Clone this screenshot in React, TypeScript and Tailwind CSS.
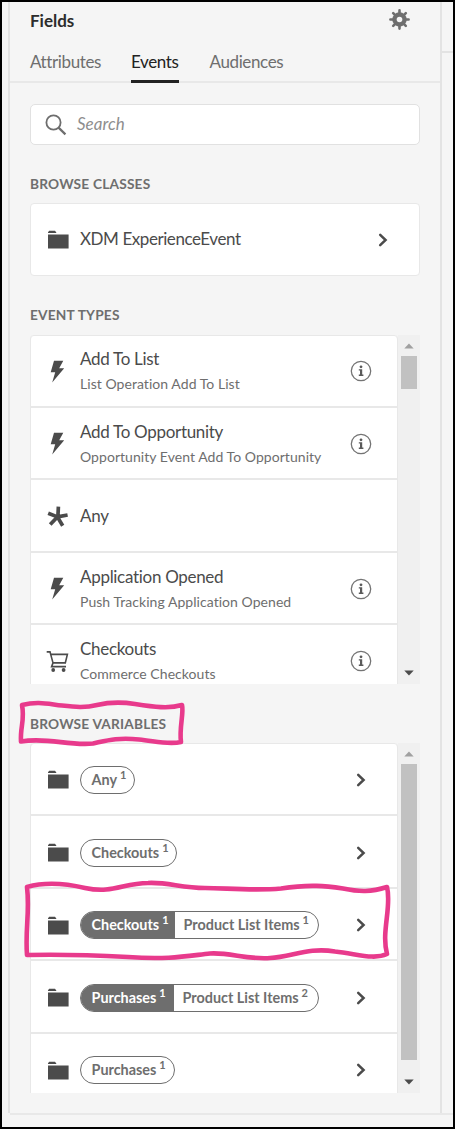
import React from "react";

type IconProps = { className?: string };

const Folder = () => (
  <svg className="block" width="21" height="19" viewBox="0 0 21 19" fill="#4b4b4b">
    <path d="M0 2.2 1.2.7H7L8.3 2.4V3H0zM0 4.5h20.6v14H0z" />
  </svg>
);

const Bolt = () => (
  <svg className="block" width="15" height="23" viewBox="0 0 15 23" fill="#4b4b4b">
    <path d="M4 .8H13.3L9.2 8.3H14.2L2.2 22.4 5.2 12.2H.7z" />
  </svg>
);

const Asterisk = () => (
  <svg className="block" width="21" height="21" viewBox="0 0 21 21" stroke="#4b4b4b" strokeWidth="3.7">
    <path d="M11.4 .7 10.9 10.4M10.4 10.9 1.2 7.2M10.4 10.9 20.6 9M10.4 10.9 3.2 18.6M10.4 10.9l5.3 8.8" />
  </svg>
);

const Cart = () => (
  <svg className="block" width="23" height="23" viewBox="0 0 23 23" fill="none" stroke="#4b4b4b" strokeWidth="1.6">
    <path d="M.7 1.9H4L7 12.9 5.6 16.6H20M4.8 4.4H21.4L19.3 12.9H7" />
    <circle cx="7.2" cy="20" r="1.9" fill="#4b4b4b" stroke="none" />
    <circle cx="17.6" cy="20" r="1.9" fill="#4b4b4b" stroke="none" />
  </svg>
);

const Info = () => (
  <svg className="block" width="22" height="22" viewBox="0 0 22 22">
    <circle cx="11" cy="11" r="9.7" fill="none" stroke="#747474" strokeWidth="1.3" />
    <circle cx="11" cy="6.8" r="1.4" fill="#5a5a5a" />
    <path d="M8.8 9.2H12.2V14.5H13.4V15.9H8.8V14.5H10V10.6H8.8z" fill="#5a5a5a" />
  </svg>
);

const Chevron = () => (
  <svg className="block" width="10" height="14" viewBox="0 0 10 14" fill="none" stroke="#4b4b4b" strokeWidth="2.5">
    <path d="M2.2 1.8 7.6 7 2.2 12.2" strokeLinecap="round" />
  </svg>
);

const Gear = () => (
  <svg className="block" width="21" height="21" viewBox="0 0 21 21">
    <g stroke="#6e6e6e" strokeWidth="2.6" strokeLinecap="round">
      <path d="M10.5 1.4V19.6M1.4 10.5H19.6" />
      <path d="M4.2 4.2 16.8 16.8M16.8 4.2 4.2 16.8" />
    </g>
    <circle cx="10.5" cy="10.5" r="7.2" fill="#6e6e6e" />
    <circle cx="10.5" cy="10.5" r="2.8" fill="#f5f5f5" />
  </svg>
);

const SearchIcon = () => (
  <svg className="block" width="22" height="22" viewBox="0 0 22 22" fill="none" stroke="#6e6e6e" strokeWidth="1.8">
    <circle cx="8.5" cy="8.5" r="7.1" />
    <path d="M13.6 13.6 20.4 20.4" strokeWidth="2.2" />
  </svg>
);

const Arrow = ({ down }: { down?: boolean }) => (
  <svg className="block" width="10" height="6" viewBox="0 0 10 6">
    {down ? <path d="M.3.4H9.7L5 5.6z" fill="#4b4b4b" /> : <path d="M.3 5.6H9.7L5 .4z" fill="#a0a0a0" />}
  </svg>
);

const icons: Record<string, React.FC<IconProps>> = { bolt: Bolt, any: Asterisk, cart: Cart };

const events = [
  { icon: "bolt", title: "Add To List", sub: "List Operation Add To List" },
  { icon: "bolt", title: "Add To Opportunity", sub: "Opportunity Event Add To Opportunity" },
  { icon: "any", title: "Any", sub: "" },
  { icon: "bolt", title: "Application Opened", sub: "Push Tracking Application Opened" },
  { icon: "cart", title: "Checkouts", sub: "Commerce Checkouts" },
];

type Part = { text: string; count: string; width: string };
const variables: Part[][] = [
  [{ text: "Any", count: "1", width: "w-[53px]" }],
  [{ text: "Checkouts", count: "1", width: "w-[95px]" }],
  [
    { text: "Checkouts", count: "1", width: "w-[94px]" },
    { text: "Product List Items", count: "1", width: "w-[143px]" },
  ],
  [
    { text: "Purchases", count: "1", width: "w-[93px]" },
    { text: "Product List Items", count: "2", width: "w-[144px]" },
  ],
  [{ text: "Purchases", count: "1", width: "w-[93px]" }],
];

const Pill = ({ parts }: { parts: Part[] }) => (
  <div className="flex h-[28px] overflow-hidden rounded-full border-[1.3px] border-[#6e6e6e]">
    {parts.map((p, i) => {
      const dark = parts.length > 1 && i === 0;
      return (
        <div
          key={i}
          className={`${p.width} ${dark ? "bg-[#6e6e6e] text-white" : "text-[#6e6e6e]"} ${i === 1 ? "pl-[8.5px]" : "pl-[10.5px]"} flex shrink-0 text-[14.4px] leading-[26px] font-bold whitespace-nowrap`}
        >
          {p.text}
          <span className="ml-[3px] text-[11px] leading-[16px]">{p.count}</span>
        </div>
      );
    })}
  </div>
);

const Label = ({ children, className }: { children: string; className: string }) => (
  <h2 className={`h-[20px] text-[13.7px] leading-[20px] font-bold tracking-[0.2px] whitespace-nowrap text-[#6e6e6e] ${className}`}>{children}</h2>
);

const Scrollbar = ({ thumb }: { thumb: string }) => (
  <div className="flex h-full w-[22px] flex-col items-center bg-[#f0f0f0] pt-[8px] pb-[8px]">
    <Arrow />
    <div className={`mt-[7px] w-[16.5px] bg-[#c1c1c1] ${thumb}`} />
    <div className="mt-auto">
      <Arrow down />
    </div>
  </div>
);

export default function App() {
  return (
    <div className="relative flex h-[1129px] w-[455px] flex-col overflow-hidden border-2 border-black bg-[#f5f5f5] font-['Lato','Noto_Sans',sans-serif]">
      <div className="flex h-[1111px] shrink-0">
        <div className="w-[8px] shrink-0 border-r-[2.4px] border-[#e3e3e3]" />
        <div className="flex w-[430px] shrink-0 flex-col">
          <header className="flex h-[36px] items-start justify-between pr-[30px] pl-[20px]">
            <h1 className="mt-[7px] text-[17px] leading-[24px] font-bold text-[#2c2c2c]">Fields</h1>
            <div className="mt-[7px]">
              <Gear />
            </div>
          </header>
          <nav className="flex h-[45px] border-b-2 border-[#e8e8e8] pl-[20px] text-[17px] leading-[24px] tracking-[-0.38px] text-[#6e6e6e]">
            <div className="w-[101px] pt-[12px]">Attributes</div>
            <div className="mr-[30.5px] h-[45px] w-[48px] border-b-[3px] border-[#222] pt-[12px] text-[#222]">Events</div>
            <div className="pt-[12px]">Audiences</div>
          </nav>
          <div className="pr-[20px] pl-[20px]">
            <div className="mt-[21px] flex h-[41px] items-center rounded-[5px] border-[1.5px] border-[#e1e1e1] bg-white pl-[14px]">
              <SearchIcon />
              <span className="mb-[2px] ml-[10px] text-[17px] leading-[24px] text-[#8e8e8e] italic">Search</span>
            </div>
            <Label className="mt-[29px]">BROWSE CLASSES</Label>
            <div className="mt-[9px] flex h-[73px] items-center rounded-[4px] border border-[#e8e8e8] bg-white pl-[17px]">
              <Folder />
              <span className="mb-[2px] ml-[11px] text-[17px] leading-[24px] tracking-[-0.43px] text-[#4b4b4b]">XDM ExperienceEvent</span>
              <span className="mr-[31px] ml-auto">
                <Chevron />
              </span>
            </div>
            <Label className="mt-[29px]">EVENT TYPES</Label>
            <div className="mt-[10px] flex h-[349px] overflow-hidden">
              <div className="h-full w-[368px] shrink-0 overflow-hidden rounded-t-[4px] border-r border-l border-[#e8e8e8] bg-white shadow-[inset_0_1px_0_#e8e8e8]">
                {events.map((e) => {
                  const Icon = icons[e.icon];
                  return (
                    <div key={e.title} className="flex h-[72.6px] items-center border-b-2 border-[#e8e8e8] pt-[1.6px]">
                      <div className="flex w-[49px] shrink-0 justify-center pl-[4px]">
                        <Icon />
                      </div>
                      <div className="whitespace-nowrap">
                        <div className="text-[17px] leading-[26px] tracking-[-0.3px] text-[#4b4b4b]">{e.title}</div>
                        {e.sub && <div className="text-[14px] leading-[24px] tracking-[0.05px] text-[#6e6e6e]">{e.sub}</div>}
                      </div>
                      {e.sub && (
                        <span className="mr-[25px] ml-auto">
                          <Info />
                        </span>
                      )}
                    </div>
                  );
                })}
              </div>
              <Scrollbar thumb="h-[33px]" />
            </div>
            <Label className="mt-[30px]">BROWSE VARIABLES</Label>
            <div className="mt-[9px] flex h-[350px] overflow-hidden">
              <div className="h-full w-[368px] shrink-0 overflow-hidden rounded-t-[4px] border-r border-l border-[#e8e8e8] bg-white pt-[0.5px] shadow-[inset_0_1px_0_#e8e8e8]">
                {variables.map((v, i) => (
                  <div key={i} className="flex h-[72.6px] items-center border-b-2 border-[#e8e8e8] pt-[2.4px] pl-[17px]">
                    <Folder />
                    <div className="ml-[11px]">
                      <Pill parts={v} />
                    </div>
                    <span className="mr-[31px] ml-auto">
                      <Chevron />
                    </span>
                  </div>
                ))}
              </div>
              <Scrollbar thumb="h-[296px]" />
            </div>
          </div>
        </div>
        <div className="flex-1 border-l-[2.4px] border-[#e3e3e3]">
          <div className="h-[51px] border-b-2 border-[#e3e3e3]" />
        </div>
      </div>
      <div className="ml-[8px] h-[14px] shrink-0 border-t-2 border-[#e8e8e8]" />
      <svg className="pointer-events-none absolute -top-[2px] -left-[2px]" width="455" height="1129" viewBox="0 0 455 1129" fill="none" stroke="#e83a8c" strokeWidth="4.6" strokeLinejoin="round">
        <path d="M22 705C38 701 48 704 62 705.5C75 707 85 708 97 705C110 702 122 702 135 704C154 707 169 709 182 705C184 713 179 728 181 742C168 745 155 741 139 739.500C117 737 105 741 93 743.500C68 746 48 737 21 741.500C20 727 25 720 22 705Z" />
        <path d="M27 887C48 881 68 884 85 888C113 894 123 883 148 883C168 882 181 888 205 888C225 888 253 891 281 888.500C310 884 326 886 343 888.500C360 892 371 892 387 887C392 906 381 932 387 954C374 960 358 954 335 951.500C308 947 292 957 270 958C249 960 228 952 210 953.500C187 956 168 960 128 957C90 955 64 954 27 955C25 929 30 912 27 887Z" />
      </svg>
    </div>
  );
}
